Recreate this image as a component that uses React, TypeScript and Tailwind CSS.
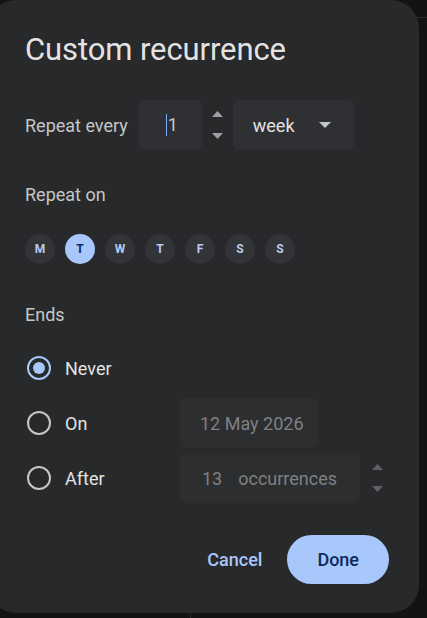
import React from "react";

const days = ["M", "T", "W", "T", "F", "S", "S"];

function Spinner({ dim }: { dim?: boolean }) {
  const c = dim ? "#5f6063" : "#9d9ea1";
  return (
    <div className="flex h-[50px] w-[31px] shrink-0 flex-col items-center justify-center gap-[16px]">
      <svg width="11" height="6" viewBox="0 0 11 6">
        <path d="M0 6 L5.5 0 L11 6 Z" fill={c} />
      </svg>
      <svg width="11" height="6" viewBox="0 0 11 6">
        <path d="M0 0 L5.5 6 L11 0 Z" fill={c} />
      </svg>
    </div>
  );
}

function Radio({ checked }: { checked?: boolean }) {
  return (
    <div
      className={`ml-[2px] flex h-[24px] w-[24px] shrink-0 items-center justify-center rounded-full border-2 ${
        checked ? "border-[#a8c7fa]" : "border-[#c4c7c5]"
      }`}
    >
      {checked && <div className="h-[12px] w-[12px] rounded-full bg-[#a8c7fa]" />}
    </div>
  );
}

export default function App() {
  return (
    <div
      className="relative h-[618px] w-[427px] overflow-hidden bg-[#131314]"
      style={{ fontFamily: "Roboto, 'Liberation Sans', sans-serif" }}
    >
      <div className="absolute right-0 top-[17px] h-px w-[22px] bg-[#2a2b2d]" />
      <div className="absolute bottom-0 left-[190px] h-[5px] w-px bg-[#2a2b2d]" />
      <div className="relative ml-[-12px] flex h-[613px] w-[431px] flex-col rounded-[28px] bg-[#28292b] pl-[37px] pr-[30px]">
        <h1 className="mt-[32px] text-[31px] leading-[36px] tracking-[-0.1px] text-[#e3e3e3]">Custom recurrence</h1>

        <div className="mt-[32px] flex h-[50px] items-center">
          <span className="text-[18px] text-[#c4c7c5]">Repeat every</span>
          <div className="ml-[10px] flex h-[50px] w-[64px] shrink-0 items-center rounded-[6px] bg-[#2f3033] pl-[28px]">
            <span className="border-l border-[#7cacf8] pl-px text-[18px] leading-[22px] text-[#c4c7c5]">1</span>
          </div>
          <Spinner />
          <div className="flex h-[50px] w-[121px] shrink-0 items-center rounded-[6px] bg-[#2f3033] pl-[20px]">
            <span className="text-[18px] text-[#e3e3e3]">week</span>
            <svg className="ml-[24px]" width="12" height="6" viewBox="0 0 12 6">
              <path d="M0 0 L6 6 L12 0 Z" fill="#c4c7c5" />
            </svg>
          </div>
        </div>

        <div className="mt-[33px] text-[18px] leading-[24px] text-[#c4c7c5]">Repeat on</div>

        <div className="mt-[27px] flex gap-[10px]">
          {days.map((d, i) => (
            <div
              key={i}
              className={`flex h-[30px] w-[30px] items-center justify-center rounded-full text-[12px] font-bold ${
                i === 1 ? "bg-[#a8c7fa] text-[#0b2a5c]" : "bg-[#333438] text-[#b8cbef]"
              }`}
            >
              {d}
            </div>
          ))}
        </div>

        <div className="mt-[39px] text-[18px] leading-[24px] text-[#c4c7c5]">Ends</div>

        <div className="mt-[16px] flex flex-col gap-[5px]">
          <div className="flex h-[50px] items-center">
            <Radio checked />
            <span className="ml-[14px] text-[18px] text-[#e3e3e3]">Never</span>
          </div>
          <div className="flex h-[50px] items-center">
            <div className="flex w-[155px] shrink-0 items-center">
              <Radio />
              <span className="ml-[14px] text-[18px] text-[#e3e3e3]">On</span>
            </div>
            <div className="flex h-[50px] w-[138px] shrink-0 items-center rounded-[6px] bg-[#2d2e30] pl-[20px] text-[18px] text-[#7f8083]">
              12 May 2026
            </div>
          </div>
          <div className="flex h-[50px] items-center">
            <div className="flex w-[155px] shrink-0 items-center">
              <Radio />
              <span className="ml-[14px] text-[18px] text-[#e3e3e3]">After</span>
            </div>
            <div className="flex h-[50px] w-[180px] shrink-0 items-center rounded-[6px] bg-[#2d2e30] pl-[22px] text-[18px] text-[#7f8083]">
              <span>13</span>
              <span className="ml-[16px]">occurrences</span>
            </div>
            <div className="ml-[2px] shrink-0">
              <Spinner dim />
            </div>
          </div>
        </div>

        <div className="mt-[32px] flex items-center justify-end">
          <button className="text-[18px] font-medium text-[#a8c7fa]">Cancel</button>
          <button className="ml-[25px] h-[49px] rounded-full bg-[#a8c7fa] px-[30px] text-[18px] font-medium text-[#0b2a5c]">
            Done
          </button>
        </div>
      </div>
    </div>
  );
}
